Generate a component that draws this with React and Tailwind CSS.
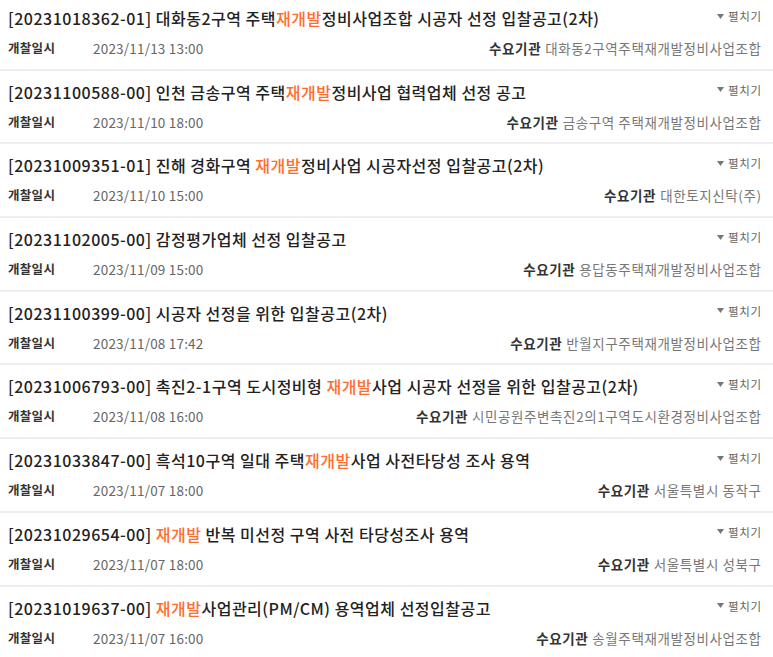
import React from "react";

const rows = [
  { no: "20231018362-01", pre: "대화동2구역 주택", hl: "재개발", post: "정비사업조합 시공자 선정 입찰공고(2차)", date: "2023/11/13 13:00", org: "대화동2구역주택재개발정비사업조합" },
  { no: "20231100588-00", pre: "인천 금송구역 주택", hl: "재개발", post: "정비사업 협력업체 선정 공고", date: "2023/11/10 18:00", org: "금송구역 주택재개발정비사업조합" },
  { no: "20231009351-01", pre: "진해 경화구역 ", hl: "재개발", post: "정비사업 시공자선정 입찰공고(2차)", date: "2023/11/10 15:00", org: "대한토지신탁(주)" },
  { no: "20231102005-00", pre: "감정평가업체 선정 입찰공고", hl: "", post: "", date: "2023/11/09 15:00", org: "용답동주택재개발정비사업조합" },
  { no: "20231100399-00", pre: "시공자 선정을 위한 입찰공고(2차)", hl: "", post: "", date: "2023/11/08 17:42", org: "반월지구주택재개발정비사업조합" },
  { no: "20231006793-00", pre: "촉진2-1구역 도시정비형 ", hl: "재개발", post: "사업 시공자 선정을 위한 입찰공고(2차)", date: "2023/11/08 16:00", org: "시민공원주변촉진2의1구역도시환경정비사업조합" },
  { no: "20231033847-00", pre: "흑석10구역 일대 주택", hl: "재개발", post: "사업 사전타당성 조사 용역", date: "2023/11/07 18:00", org: "서울특별시 동작구" },
  { no: "20231029654-00", pre: "", hl: "재개발", post: " 반복 미선정 구역 사전 타당성조사 용역", date: "2023/11/07 18:00", org: "서울특별시 성북구" },
  { no: "20231019637-00", pre: "", hl: "재개발", post: "사업관리(PM/CM) 용역업체 선정입찰공고", date: "2023/11/07 16:00", org: "송월주택재개발정비사업조합" },
];

function Row({ r }) {
  return (
    <div className="h-[73.7px] border-b-2 border-[#eeeeee] pl-[8px] pr-[12px] pt-[10px]">
      <div className="flex items-start justify-between">
        <div className="text-[16px] leading-[22px] font-medium tracking-[0.5px] text-[#222222] whitespace-pre">
          [{r.no}] {r.pre}
          {r.hl && <span className="text-[#ff6d2e]">{r.hl}</span>}
          {r.post}
        </div>
        <div className="flex items-center text-[11.5px] leading-[18px] tracking-[0.6px] text-[#666666]">
          <svg width="7" height="5" viewBox="0 0 7 5" className="mr-[4px]">
            <polygon points="0,0 7,0 3.5,5" fill="#777777" />
          </svg>
          <span className="-mr-[0.6px]">펼치기</span>
        </div>
      </div>
      <div className="mt-[9px] flex items-center justify-between leading-[20px]">
        <div className="flex items-center">
          <span className="w-[85px] text-[12.5px] font-bold tracking-[0.3px] text-[#333333]">개찰일시</span>
          <span className="text-[13.5px] tracking-[0.2px] text-[#666666]">{r.date}</span>
        </div>
        <div className="flex items-center text-[13.5px] tracking-[0.6px]">
          <span className="font-bold text-[#333333]">수요기관</span>
          <span className="ml-[4px] -mr-[0.6px] text-[#777777]">{r.org}</span>
        </div>
      </div>
    </div>
  );
}

export default function App() {
  return (
    <div
      className="w-[773px] h-[657px] overflow-hidden bg-white"
      style={{ fontFamily: '"Noto Sans CJK KR", "Noto Sans", sans-serif' }}
    >
      <div className="-mt-[3px]">
        {rows.map((r, i) => (
          <Row key={i} r={r} />
        ))}
      </div>
    </div>
  );
}
